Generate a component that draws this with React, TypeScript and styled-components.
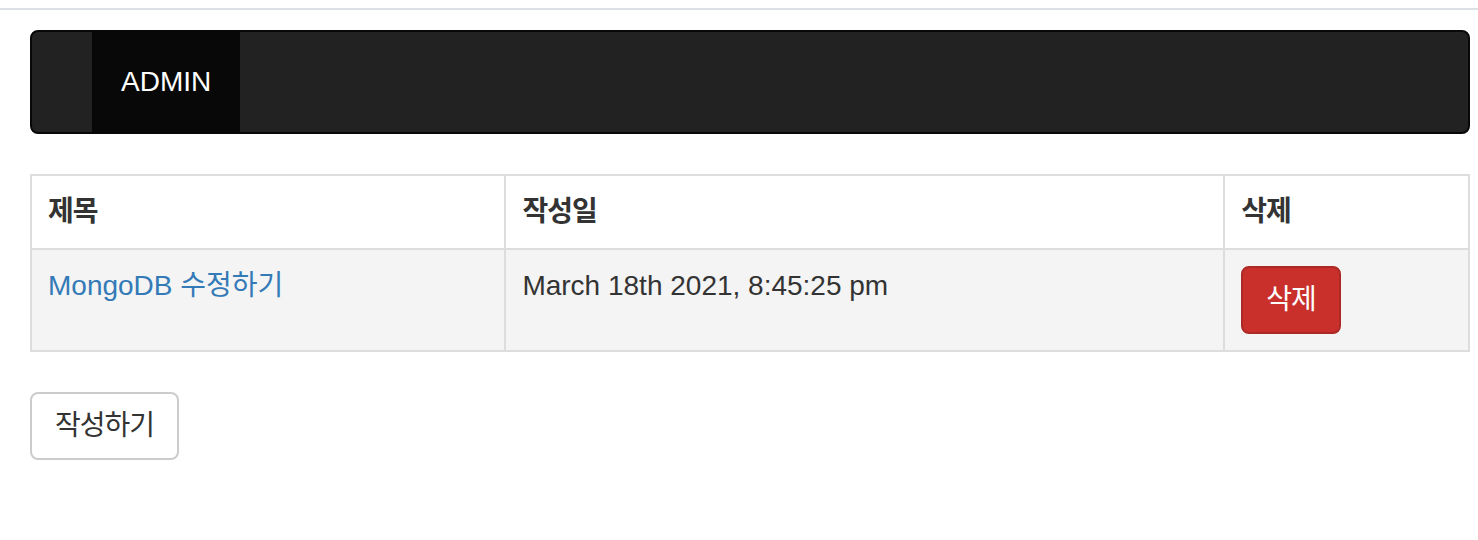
import * as React from 'react'
import styled, {createGlobalStyle} from 'styled-components'

const GlobalStyle = createGlobalStyle`
  body {
    margin: 0;
    background: #fff;
    font-family: "Liberation Sans", "Noto Sans CJK KR", sans-serif;
    font-size: 28px;
    line-height: 40px;
    color: #333;
  }
  * {
    box-sizing: border-box;
  }
`

const Page = styled.div`
  padding-top: 8px;
`

const TopRule = styled.div`
  border-top: 2px solid #dcdfe3;
`

const Container = styled.div`
  padding: 20px 8px 0 30px;
`

const Navbar = styled.nav`
  display: flex;
  height: 104px;
  margin-bottom: 40px;
  padding-left: 60px;
  background: #222;
  border: 2px solid #080808;
  border-radius: 8px;
`

const Brand = styled.a`
  display: flex;
  align-items: center;
  padding: 0 29px;
  background: #080808;
  color: #fff;
  font-size: 28px;
  text-decoration: none;
`

const Table = styled.table`
  width: 100%;
  border-collapse: collapse;
  border-spacing: 0;
  margin-bottom: 40px;
  border: 2px solid #ddd;
`

const HeadCell = styled.th<{$w: number}>`
  width: ${p => p.$w}px;
  padding: 16px;
  text-align: left;
  vertical-align: bottom;
  font-weight: bold;
  letter-spacing: -1px;
  border: 2px solid #ddd;
  height: 74px;
`

const Row = styled.tr`
  background: #f4f4f4;
`

const Cell = styled.td`
  padding: 16px;
  vertical-align: top;
  border: 2px solid #ddd;
  height: 101px;
`

const Link = styled.a`
  color: #337ab7;
  text-decoration: none;
`

const Button = styled.button<{$danger?: boolean}>`
  display: inline-block;
  padding: 12px 23px;
  font-family: inherit;
  font-size: 28px;
  line-height: 40px;
  letter-spacing: -1px;
  border-radius: 8px;
  cursor: pointer;
  border: 2px solid ${p => (p.$danger ? '#ac2925' : '#ccc')};
  background: ${p => (p.$danger ? '#c9302c' : '#fff')};
  color: ${p => (p.$danger ? '#fff' : '#333')};
`

const posts = [
  {title: 'MongoDB 수정하기', date: 'March 18th 2021, 8:45:25 pm'},
]

export default function App() {
  return (
    <Page>
      <GlobalStyle />
      <TopRule />
      <Container>
        <Navbar>
          <Brand href="#">ADMIN</Brand>
        </Navbar>
        <Table>
          <thead>
            <tr>
              <HeadCell $w={475}>제목</HeadCell>
              <HeadCell $w={720}>작성일</HeadCell>
              <HeadCell $w={245}>삭제</HeadCell>
            </tr>
          </thead>
          <tbody>
            {posts.map((post, i) => (
              <Row key={i}>
                <Cell>
                  <Link href="#">{post.title}</Link>
                </Cell>
                <Cell>{post.date}</Cell>
                <Cell>
                  <Button $danger>삭제</Button>
                </Cell>
              </Row>
            ))}
          </tbody>
        </Table>
        <Button>작성하기</Button>
      </Container>
    </Page>
  )
}
